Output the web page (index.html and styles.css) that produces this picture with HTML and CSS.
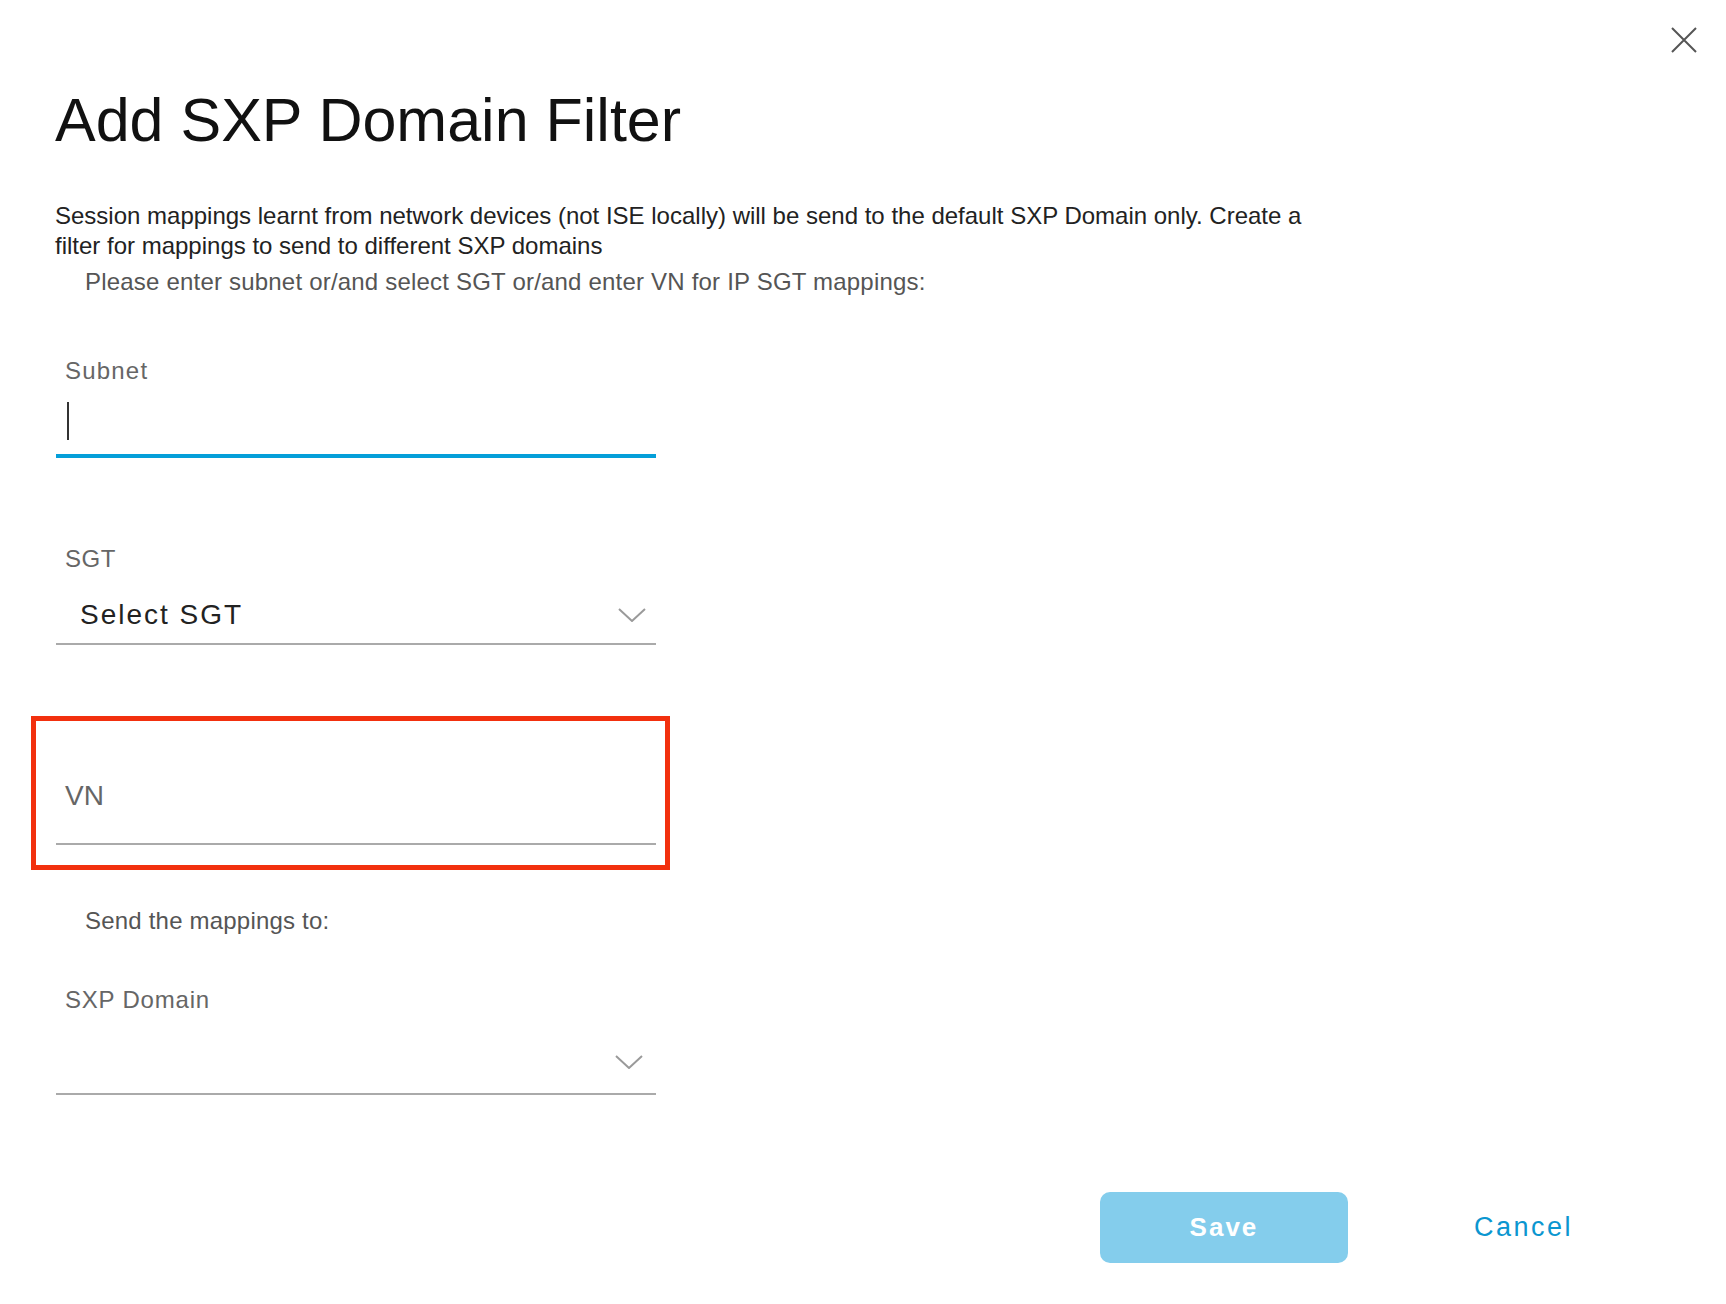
FILE: index.html
```html
<!DOCTYPE html>
<html lang="en">
<head>
<meta charset="utf-8">
<title>Add SXP Domain Filter</title>
<link rel="stylesheet" href="styles.css">
</head>
<body>
<div class="dialog">
  <button class="close" aria-label="Close">
    <svg viewBox="0 0 26 26" width="26" height="26"><path d="M1 1 L25 25 M25 1 L1 25" stroke="#555" stroke-width="2" fill="none"/></svg>
  </button>
  <h1 class="title">Add SXP Domain Filter</h1>
  <p class="desc">Session mappings learnt from network devices (not ISE locally) will be send to the default SXP Domain only. Create a filter for mappings to send to different SXP domains</p>
  <p class="hint">Please enter subnet or/and select SGT or/and enter VN for IP SGT mappings:</p>

  <div class="field subnet">
    <div class="label label-subnet">Subnet</div>
    <div class="input focused"><span class="caret"></span></div>
  </div>

  <div class="field sgt">
    <div class="label">SGT</div>
    <div class="select">
      <span class="value">Select SGT</span>
      <svg class="chev" viewBox="0 0 28 14" width="28" height="14"><polyline points="1,1 14,13 27,1" stroke="#9a9a9a" stroke-width="2" fill="none"/></svg>
    </div>
  </div>

  <div class="highlight">
    <div class="field vn">
      <div class="input vn-input"><span class="placeholder">VN</span></div>
    </div>
  </div>

  <p class="hint send">Send the mappings to:</p>

  <div class="field domain">
    <div class="label label-domain">SXP Domain</div>
    <div class="select select-domain">
      <span class="value"></span>
      <svg class="chev" viewBox="0 0 28 14" width="28" height="14"><polyline points="1,1 14,13 27,1" stroke="#9a9a9a" stroke-width="2" fill="none"/></svg>
    </div>
  </div>

  <div class="actions">
    <button class="save">Save</button>
    <button class="cancel">Cancel</button>
  </div>
</div>
</body>
</html>
```

FILE: styles.css
```css
html, body {
  margin: 0;
  background: #fff;
}
body {
  font-family: "Liberation Sans", Arial, sans-serif;
}
.dialog {
  position: relative;
  box-sizing: border-box;
  height: 1304px;
  padding: 84px 0 0 55px;
}
.close {
  position: absolute;
  top: 27px;
  right: 29px;
  width: 26px;
  height: 26px;
  padding: 0;
  border: 0;
  background: none;
}
.close svg { display: block; }
.title {
  margin: 0;
  font-size: 61px;
  line-height: 72px;
  font-weight: normal;
  color: #111;
}
.desc {
  margin: 45px 0 0;
  max-width: 1270px;
  font-size: 24px;
  line-height: 30px;
  color: #222;
}
.hint {
  margin: 6px 0 0 30px;
  font-size: 24px;
  line-height: 30px;
  color: #555;
  letter-spacing: 0.2px;
}
.field {
  width: 600px;
  margin-left: 1px;
}
.label {
  padding-left: 9px;
  font-size: 24px;
  line-height: 30px;
  color: #666;
  letter-spacing: 0.5px;
}
.label-subnet { letter-spacing: 1.2px; }
.label-domain { letter-spacing: 0.8px; }
.subnet { margin-top: 59px; }
.input {
  box-sizing: border-box;
  height: 72px;
  padding: 16px 0 0 11px;
  border-bottom: 4px solid #049fd9;
}
.caret {
  display: block;
  width: 2px;
  height: 38px;
  background: #333;
}
.sgt { margin-top: 86px; }
.select {
  box-sizing: border-box;
  height: 71px;
  display: flex;
  align-items: center;
  padding: 12px 10px 0 24px;
  border-bottom: 2px solid #aaa;
}
.value {
  flex: 1;
  font-size: 28px;
  letter-spacing: 2px;
  color: #222;
}
.chev { display: block; }
.highlight {
  box-sizing: border-box;
  width: 639px;
  margin: 71px 0 0 -24px;
  padding: 40px 9px 20px 20px;
  border: 5px solid #f2300e;
}
.highlight .field { margin-left: 0; }
.vn-input {
  box-sizing: border-box;
  height: 84px;
  padding: 20px 0 0 9px;
  border-bottom: 2px solid #aaa;
}
.placeholder {
  display: block;
  font-size: 28px;
  line-height: 30px;
  color: #666;
}
.send { margin-top: 36px; }
.domain { margin-top: 49px; }
.select-domain {
  height: 80px;
  align-items: flex-start;
  padding: 40px 13px 0 24px;
}
.actions {
  display: flex;
  justify-content: flex-end;
  align-items: center;
  gap: 126px;
  margin-top: 97px;
  padding-right: 153px;
}
.save {
  width: 248px;
  height: 71px;
  border: 0;
  border-radius: 10px;
  background: #84cdec;
  color: #fff;
  font-family: inherit;
  font-size: 26px;
  font-weight: bold;
  letter-spacing: 2px;
}
.cancel {
  padding: 0;
  border: 0;
  background: none;
  color: #0b96d0;
  font-family: inherit;
  font-size: 27px;
  letter-spacing: 2.5px;
}
```
